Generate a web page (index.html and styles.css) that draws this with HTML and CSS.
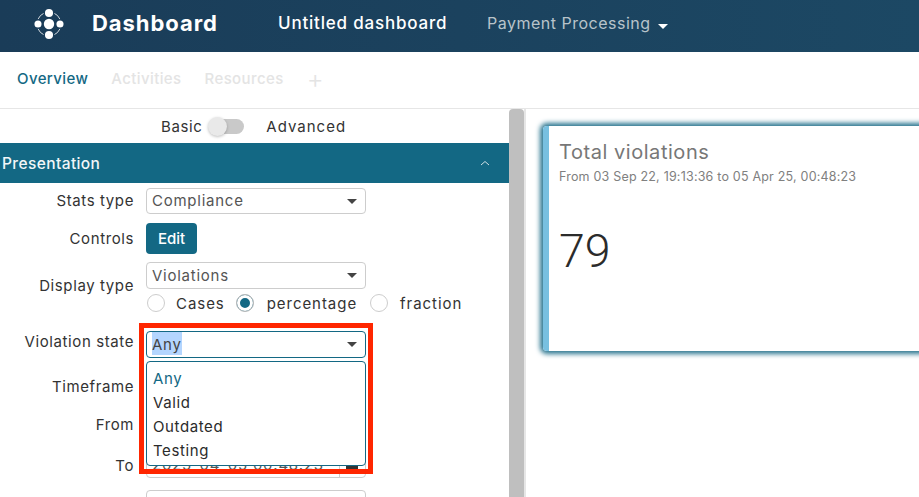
FILE: index.html

```html
<!DOCTYPE html>
<html lang="en">
<head>
    <meta charset="UTF-8">
    <meta name="viewport" content="width=device-width, initial-scale=1.0">
    <title>Dashboard</title>
    <link rel="stylesheet" href="styles.css">
</head>
<body>
    <header class="topbar">
        <svg class="logo" width="32" height="32" viewBox="0 0 32 32">
            <circle cx="16" cy="16" r="12" fill="none" stroke="#fff" stroke-width="0.800"/>
            <circle cx="16" cy="5" r="4.800" fill="#fff" stroke="#1a3c58" stroke-width="1.500"/>
            <circle cx="16" cy="27" r="4.800" fill="#fff" stroke="#1a3c58" stroke-width="1.500"/>
            <circle cx="5" cy="16" r="4.300" fill="#fff" stroke="#1a3c58" stroke-width="1.500"/>
            <circle cx="27" cy="16" r="4.300" fill="#fff" stroke="#1a3c58" stroke-width="1.500"/>
            <circle cx="16" cy="16" r="5.200" fill="#fff"/>
        </svg>
        <span class="brand">Dashboard</span>
        <span class="board-name">Untitled dashboard</span>
        <span class="process">Payment Processing</span>
        <span class="process-caret"></span>
    </header>

    <nav class="tabs">
        <span class="tab active">Overview</span>
        <span class="tab">Activities</span>
        <span class="tab">Resources</span>
        <span class="tab tab-add">+</span>
    </nav>

    <main class="content">
        <aside class="sidebar">
            <div class="panel">
                <div class="mode">
                    <span>Basic</span>
                    <span class="toggle"><span class="knob"></span></span>
                    <span class="mode-adv">Advanced</span>
                </div>
                <div class="section-head">
                    <span>Presentation</span>
                    <svg width="10" height="6" viewBox="0 0 10 6"><path d="M1 5 L5 1.500 L9 5" fill="none" stroke="#cfe0e6" stroke-width="1"/></svg>
                </div>

                <div class="row row-stats">
                    <label>Stats type</label>
                    <div class="select">Compliance</div>
                </div>
                <div class="row row-controls">
                    <label>Controls</label>
                    <button class="btn">Edit</button>
                </div>
                <div class="row row-display">
                    <label>Display type</label>
                    <div>
                        <div class="select tall">Violations</div>
                        <div class="radios">
                            <span class="radio"></span><span class="radio-label">Cases</span>
                            <span class="radio checked"></span><span class="radio-label">percentage</span>
                            <span class="radio last"></span><span class="radio-label">fraction</span>
                        </div>
                    </div>
                </div>
                <div class="row row-state">
                    <label>Violation state</label>
                    <div class="select-wrap">
                        <div class="select open"><span class="picked">Any</span></div>
                        <ul class="menu">
                            <li class="current">Any</li>
                            <li>Valid</li>
                            <li>Outdated</li>
                            <li>Testing</li>
                        </ul>
                        <div class="callout"></div>
                    </div>
                </div>
                <div class="row row-time">
                    <label>Timeframe</label>
                    <div class="select"></div>
                </div>
                <div class="row row-from">
                    <label>From</label>
                    <div class="select"></div>
                </div>
                <div class="row row-to">
                    <label>To</label>
                    <div class="select date">2025-04-05 00:48:23</div>
                </div>
                <div class="row row-last">
                    <label></label>
                    <div class="select"></div>
                </div>
            </div>
            <div class="scrollbar"></div>
        </aside>

        <section class="stage">
            <div class="card">
                <h2>Total violations</h2>
                <p class="range">From 03 Sep 22, 19:13:36 to 05 Apr 25, 00:48:23</p>
                <div class="count">79</div>
            </div>
        </section>
    </main>
</body>
</html>
```

FILE: styles.css

```css
html, body {
    margin: 0;
    height: 497px;
    overflow: hidden;
}
body {
    font-family: "Inter", "Noto Sans", sans-serif;
    font-size: 15px;
    letter-spacing: 0.6px;
    color: #333;
    background-color: #fff;
    display: flex;
    flex-direction: column;
}

/* top bar */
.topbar {
    height: 52px;
    flex: none;
    display: flex;
    align-items: center;
    box-sizing: border-box;
    padding: 0 0 6px 33px;
    background: linear-gradient(90deg, #1a3c58, #1c4864);
    color: #fff;
}
.logo {
    margin-top: 1px;
}
.brand {
    margin-left: 27px;
    font-size: 22px;
    font-weight: 700;
    letter-spacing: 0.95px;
    width: 186px;
    white-space: nowrap;
}
.board-name {
    font-size: 17px;
    font-weight: 500;
    letter-spacing: 0.8px;
    width: 209px;
    white-space: nowrap;
}
.process {
    font-size: 16px;
    color: #b8c3ca;
    white-space: nowrap;
    letter-spacing: 0.5px;
}
.process-caret {
    margin: 6px 0 0 7px;
    border-left: 5px solid transparent;
    border-right: 5px solid transparent;
    border-top: 5px solid #fff;
}

/* tabs */
.tabs {
    height: 57px;
    flex: none;
    display: flex;
    align-items: center;
    gap: 23px;
    padding: 0 0 3px 17px;
    box-sizing: border-box;
    border-bottom: 1px solid #e6e6e6;
}
.tab {
    font-size: 15px;
    font-weight: 500;
    letter-spacing: 0.4px;
    color: #e4e4e4;
}
.tab.active {
    color: #136884;
}
.tab-add {
    font-size: 26px;
    font-weight: 300;
    line-height: 26px;
}

/* layout below tabs */
.content {
    flex: 1;
    display: flex;
    min-height: 0;
}
.sidebar {
    width: 526px;
    flex: none;
    display: flex;
    border-right: 2px solid #e6e6e6;
    box-sizing: border-box;
}
.panel {
    width: 509px;
    flex: none;
}
.scrollbar {
    width: 15px;
    background-color: #bfbfbf;
    border-radius: 4px 4px 0 0;
}

.mode {
    height: 34px;
    display: flex;
    align-items: center;
    padding-left: 161px;
}
.mode-adv {
    letter-spacing: 1px;
}
.toggle {
    position: relative;
    width: 31px;
    height: 15px;
    margin: 0 22px 0 11px;
    background-color: #c9c9c9;
    border-radius: 8px;
}
.knob {
    position: absolute;
    left: -5px;
    top: -2px;
    width: 19px;
    height: 19px;
    border-radius: 50%;
    background-color: #e9e9e9;
    box-shadow: 0 1px 3px rgba(0, 0, 0, 0.25);
}

.section-head {
    height: 40px;
    display: flex;
    align-items: center;
    justify-content: space-between;
    padding: 0 19px 0 2px;
    background-color: #136884;
    color: #f2f6f8;
    font-size: 15.500px;
    font-weight: 500;
    letter-spacing: 0.4px;
}

/* form rows */
.row {
    display: grid;
    grid-template-columns: 134px 220px;
    column-gap: 12px;
    align-items: center;
}
.row label {
    text-align: right;
    white-space: nowrap;
}
.row-stats { margin-top: 5px; }
.row-stats label { margin-bottom: 2px; }
.row-controls { margin-top: 9px; }
.row-display { margin-top: 8px; }
.row-display label { margin-bottom: 4px; }
.row-state { margin-top: 18px; align-items: start; }
.row-state label { margin-top: 1px; }
.row-time { margin-top: 15px; }
.row-from { margin-top: 12px; }
.row-to { margin-top: 15px; }
.row-last { margin-top: 12px; }

.select {
    position: relative;
    height: 26px;
    line-height: 24px;
    padding-left: 5px;
    box-sizing: border-box;
    border: 1px solid #cdcdcd;
    border-radius: 4px;
    color: #555;
    white-space: nowrap;
    letter-spacing: 0.75px;
}
.select::after {
    content: "";
    position: absolute;
    right: 8px;
    top: 10px;
    border-left: 5px solid transparent;
    border-right: 5px solid transparent;
    border-top: 5px solid #444;
}
.select.tall {
    height: 27px;
    line-height: 25px;
}
.select.open {
    height: 27px;
    border-color: #136884;
}
.select.date::before {
    content: "";
    position: absolute;
    right: 25px;
    top: 0;
    bottom: 0;
    border-left: 1px solid #cdcdcd;
}
.select.date::after {
    right: 7px;
    top: 6px;
    width: 12px;
    height: 12px;
    box-sizing: border-box;
    border: none;
    background-color: #333;
}
.picked {
    display: inline-block;
    background-color: #b4d5fe;
    height: 23px;
    line-height: 25px;
    color: #444;
}

.btn {
    width: 51px;
    height: 31px;
    padding: 0;
    background-color: #136884;
    color: #fff;
    border: none;
    border-radius: 4px;
    font-family: inherit;
    font-size: 15px;
    font-weight: 500;
}

.radios {
    display: flex;
    align-items: center;
    margin-top: 4px;
    height: 20px;
}
.radio {
    width: 18px;
    height: 18px;
    margin-left: 1px;
    border: 1px solid #cdcdcd;
    border-radius: 50%;
    box-sizing: border-box;
    flex: none;
    background-color: #fff;
}
.radio.checked {
    margin: 0 2px 0 -1px;
    background-color: #136884;
    box-shadow: inset 0 0 0 3px #fff;
    border-color: #bbb;
}
.radio.last {
    margin-right: 1px;
}
.radio-label {
    margin: 0 12px 0 11px;
    letter-spacing: 0.95px;
}

/* open dropdown and its annotation, both above the form */
.select-wrap {
    position: relative;
}
.menu {
    position: absolute;
    z-index: 2;
    left: 0;
    right: 0;
    top: 30px;
    height: 105px;
    margin: 0;
    padding: 5px 6px 0;
    box-sizing: border-box;
    list-style: none;
    background-color: #fff;
    border: 1px solid #136884;
    border-radius: 4px;
}
.menu li {
    height: 24px;
    line-height: 24px;
    color: #2b2b2b;
}
.menu li.current {
    color: #136884;
}
.callout {
    position: absolute;
    z-index: 3;
    left: -7px;
    top: -8px;
    width: 234px;
    height: 151px;
    box-sizing: border-box;
    border: 5px solid #ff2600;
}

/* right side */
.stage {
    flex: 1;
    padding: 17px 0 0 17px;
    min-width: 0;
}
.card {
    width: 420px;
    height: 225px;
    box-sizing: border-box;
    padding: 14px 0 0 10px;
    border-left: 6px solid #78c0e0;
    border-radius: 4px;
    box-shadow: 0 0 5px 3px #2b7690;
}
.card h2 {
    margin: 0;
    font-size: 20px;
    font-weight: 400;
    letter-spacing: 0.55px;
    line-height: 24px;
    color: #777;
}
.range {
    margin: 5px 0 0;
    font-size: 12.500px;
    letter-spacing: 0.2px;
    line-height: 16px;
    color: #808080;
    white-space: nowrap;
}
.count {
    margin-top: 39px;
    font-family: "Roboto", sans-serif;
    font-size: 46.500px;
    font-weight: 300;
    letter-spacing: 0;
    line-height: 54px;
    color: #2b2b2b;
}
```
